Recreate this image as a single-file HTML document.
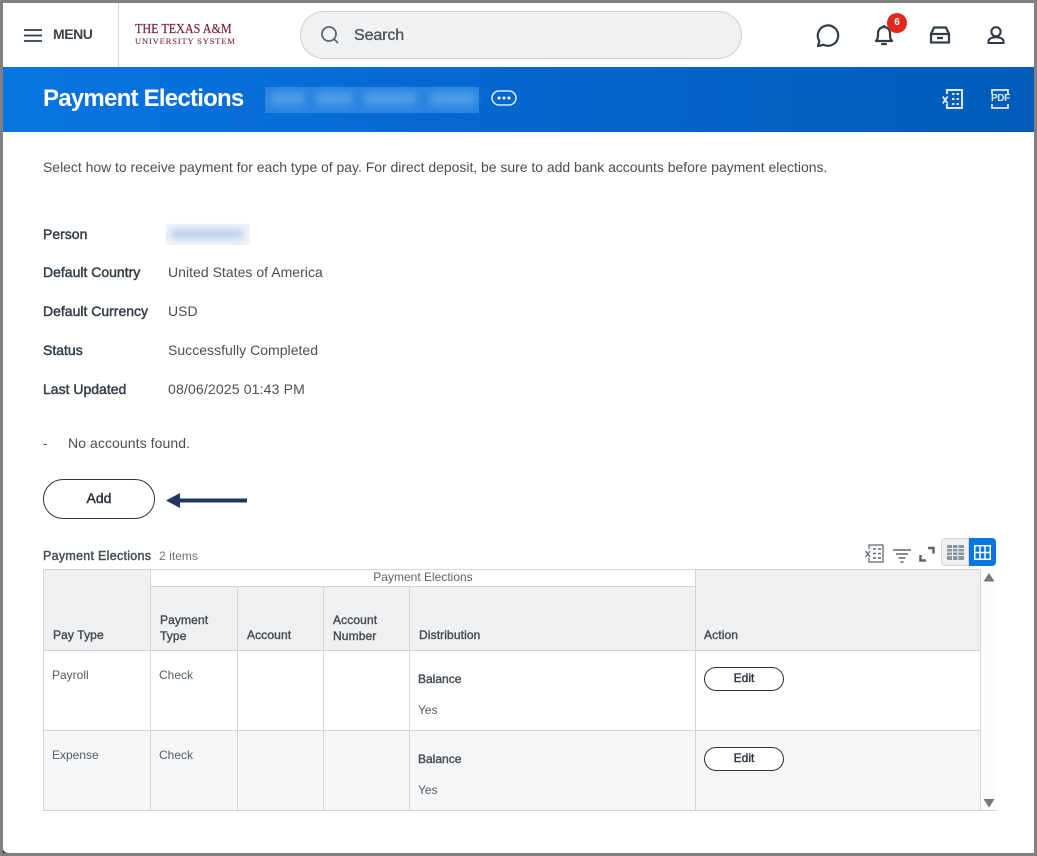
<!DOCTYPE html>
<html><head><meta charset="utf-8"><style>
html,body{margin:0;padding:0;background:#fff}
#p{position:relative;width:1037px;height:856px;overflow:hidden;background:#fff;font-family:"Liberation Sans",sans-serif;color:#333d47}
#p div,#p svg{position:absolute}
.t{white-space:nowrap;line-height:16px}
.l{font-size:14px;-webkit-text-stroke:.45px #333d47;color:#333d47;left:43px}
.v{font-size:14px;color:#494f55;left:168px;letter-spacing:.03px}
.h{font-size:12px;-webkit-text-stroke:.4px #444c54;color:#444c54;line-height:15px;white-space:nowrap;letter-spacing:.12px}
.c{font-size:12px;color:#555c63;white-space:nowrap;line-height:14px}
.b{background:#d2d4d6}
.btn{border:1px solid #333;border-radius:13px;background:#fff;box-sizing:border-box;text-align:center;font-size:12px;-webkit-text-stroke:.4px #2b3440;color:#2b3440;width:80px;height:24px;left:704px;line-height:20px}
</style></head><body><div id="p">
<!-- top bar -->
<div style="left:118px;top:3px;width:1px;height:64px;background:#d3d5d8"></div>
<svg style="left:24px;top:29px" width="18" height="13"><path d="M0 1h18M0 6.500h18M0 12h18" stroke="#333d47" stroke-width="1.800"/></svg>
<div class="t" style="left:53px;top:26px;font-size:14px;font-weight:bold;color:#3b434c;letter-spacing:-.45px">MENU</div>
<div class="t" style="left:135px;top:23px;font-family:'Liberation Serif',serif;font-size:14px;line-height:14px;color:#7a1f3d;-webkit-text-stroke:.2px #7a1f3d;transform:scaleX(.865);transform-origin:0 0">THE TEXAS A&amp;M</div>
<div class="t" style="left:135px;top:36px;font-family:'Liberation Serif',serif;font-size:8.500px;line-height:11px;color:#7a1f3d;letter-spacing:.85px;-webkit-text-stroke:.1px #7a1f3d">UNIVERSITY SYSTEM</div>
<div style="left:300px;top:11px;width:442px;height:48px;box-sizing:border-box;background:#f0f1f2;border:1px solid #ced0d3;border-radius:24px"></div>
<svg style="left:320px;top:25px" width="20" height="20" fill="none"><circle cx="9" cy="9" r="7" stroke="#5e6670" stroke-width="1.800"/><path d="M14 14l4 4" stroke="#5e6670" stroke-width="1.800"/></svg>
<div class="t" style="left:354px;top:28px;font-size:16px;color:#4d555d;-webkit-text-stroke:.35px #4d555d;letter-spacing:-.1px">Search</div>
<svg style="left:815px;top:23px" width="26" height="25" fill="none"><path d="M3 23l1.300-5A10.200 10.200 0 1 1 8.500 21.800z" stroke="#333d47" stroke-width="2.200" stroke-linejoin="round"/></svg>
<svg style="left:874px;top:24px" width="20" height="22" fill="none" stroke="#333d47" stroke-width="2.200"><path d="M2 17c2-2 2-4 2-8a6 6 0 0 1 12 0c0 4 0 6 2 8z" stroke-linejoin="round"/><path d="M8 20h4" stroke-linecap="round"/><path d="M10 1v2"/></svg>
<div style="left:887px;top:13px;width:20px;height:20px;border-radius:50%;background:#e0281c;color:#fff;font-size:10px;font-weight:bold;line-height:20px;text-align:center">6</div>
<svg style="left:929px;top:26px" width="22" height="18" fill="none" stroke="#333d47" stroke-width="2.300"><path d="M2 8l3-6.500h12l3 6.500v8.500H2z" stroke-linejoin="round"/><path d="M2 8h18"/><path d="M8 12h6"/></svg>
<svg style="left:987px;top:26px" width="18" height="18" fill="none" stroke="#333d47" stroke-width="2.100"><circle cx="9" cy="5.800" r="4.600"/><path d="M1.500 17v-2c0-2.200 3.500-3.800 7.500-3.800s7.500 1.600 7.500 3.800v2z" stroke-linejoin="round"/></svg>
<!-- header -->
<div style="left:3px;top:67px;width:1031px;height:65px;background:linear-gradient(90deg,#0875e1 0%,#0565cc 55%,#005cb9 100%)"></div>
<div class="t" style="left:43px;top:85px;font-size:24px;line-height:28px;font-weight:bold;color:#fff;letter-spacing:-.76px">Payment Elections</div>
<div style="left:265px;top:87px;width:214px;height:26px;background:#2a84e0"></div>
<div style="left:270px;top:92px;width:35px;height:14px;background:#4e9ce8;border-radius:7px;filter:blur(4px)"></div>
<div style="left:315px;top:92px;width:38px;height:14px;background:#4e9ce8;border-radius:7px;filter:blur(4px)"></div>
<div style="left:363px;top:92px;width:54px;height:14px;background:#4e9ce8;border-radius:7px;filter:blur(4px)"></div>
<div style="left:430px;top:92px;width:47px;height:14px;background:#4e9ce8;border-radius:7px;filter:blur(4px)"></div>
<svg style="left:491px;top:90px" width="26" height="16" fill="none"><rect x="1" y="1" width="24" height="14" rx="7" stroke="#fff" stroke-width="1.300"/><circle cx="8" cy="8" r="1.500" fill="#fff"/><circle cx="13" cy="8" r="1.500" fill="#fff"/><circle cx="18" cy="8" r="1.500" fill="#fff"/></svg>
<svg style="left:942px;top:89px" width="21" height="20" fill="none" stroke="#dfe9f5" stroke-width="2"><path d="M5 5V1h15v18H5v-4"/><path d="M10 5h2.500M14.500 5H17M10 10h2.500M14.500 10H17M10 15h2.500M14.500 15H17" stroke-width="2"/><path d="M.7 7.500l5 7M5.700 7.500l-5 7" stroke-width="1.800"/></svg>
<svg style="left:990px;top:89px" width="20" height="20" fill="none" stroke="#dfe9f5" stroke-width="1.800"><path d="M2 5V1h16v4M2 15v4h16v-4"/></svg>
<div class="t" style="left:991px;top:91px;font-size:10px;font-weight:bold;color:#dfe9f5;line-height:15px;letter-spacing:-.4px">PDF</div>
<!-- body -->
<div class="t" style="left:43px;top:159px;font-size:14px;color:#494f55;letter-spacing:-.03px">Select how to receive payment for each type of pay. For direct deposit, be sure to add bank accounts before payment elections.</div>
<div class="t l" style="top:226px">Person</div>
<div style="left:166px;top:224px;width:84px;height:21px;background:#eef3fa"></div>
<div style="left:170px;top:229px;width:74px;height:10px;background:#bdd0e8;border-radius:5px;filter:blur(3.500px)"></div>
<div class="t l" style="top:264px">Default Country</div><div class="t v" style="top:264px">United States of America</div>
<div class="t l" style="top:303px">Default Currency</div><div class="t v" style="top:303px">USD</div>
<div class="t l" style="top:342px">Status</div><div class="t v" style="top:342px">Successfully Completed</div>
<div class="t l" style="top:381px">Last Updated</div><div class="t v" style="top:381px;letter-spacing:.16px">08/06/2025 01:43 PM</div>
<div class="t v" style="left:43px;top:435px">-</div><div class="t v" style="left:68px;top:435px;letter-spacing:.08px">No accounts found.</div>
<div style="left:43px;top:479px;width:112px;height:40px;box-sizing:border-box;border:1px solid #333;border-radius:20px;text-align:center;font-size:14px;-webkit-text-stroke:.45px #2b3440;line-height:36px;color:#2b3440">Add</div>
<svg style="left:165px;top:492px" width="82" height="18"><path d="M1 8.500L15 1v5.500h67v4H15V16z" fill="#1f3864"/></svg>
<!-- table toolbar -->
<div class="t" style="left:43px;top:548px;font-size:12.500px;-webkit-text-stroke:.4px #444c54;color:#444c54;letter-spacing:.28px">Payment Elections</div>
<div class="t" style="left:159px;top:548px;font-size:12px;color:#6b7177;letter-spacing:.05px">2 items</div>
<svg style="left:865px;top:544px" width="19" height="20" fill="none" stroke="#5e6670" stroke-width="1.300"><path d="M4 5V1h14v17H4v-4"/><path d="M8 5h3M13 5h3M8 9.500h3M13 9.500h3M8 14h3M13 14h3" stroke-width="1.600"/><path d="M.5 7l4.500 6M5 7L.500 13"/></svg>
<svg style="left:893px;top:549px" width="18" height="14" fill="none" stroke="#5e6670" stroke-width="1.500"><path d="M0 1h18M3 5h12M5.500 9h7M7.500 13h3"/></svg>
<svg style="left:919px;top:546px" width="16" height="16" fill="none" stroke="#5e6670" stroke-width="2.500"><path d="M9 2h5.500v5.500M1.500 9v5.500H7"/></svg>
<div style="left:941px;top:538px;width:28px;height:28px;box-sizing:border-box;background:#eef0f2;border:1px solid #d5d7da;border-radius:4px 0 0 4px"></div>
<svg style="left:947px;top:545px" width="17" height="15" fill="#8a949e"><rect width="17" height="15" rx="1"/><path d="M0 3.500h17M0 7h17M0 10.500h17M5.500 0v15M11 0v15" stroke="#eef0f2" stroke-width="1"/></svg>
<div style="left:969px;top:538px;width:27px;height:28px;background:#0875e1;border-radius:0 4px 4px 0"></div>
<svg style="left:974px;top:545px" width="17" height="15" fill="none" stroke="#fff" stroke-width="1.500"><rect x=".75" y=".75" width="15.500" height="13.500"/><path d="M0 7.500h17M6 0v15M11 0v15"/></svg>
<!-- table -->
<div style="left:44px;top:570px;width:106px;height:80px;background:#eff0f2"></div>
<div style="left:151px;top:587px;width:544px;height:63px;background:#eff0f2"></div>
<div style="left:696px;top:570px;width:284px;height:80px;background:#eff0f2"></div>
<div style="left:44px;top:731px;width:936px;height:79px;background:#f5f6f8"></div>
<div class="b" style="left:43px;top:569px;width:938px;height:1px"></div>
<div class="b" style="left:151px;top:586px;width:544px;height:1px"></div>
<div class="b" style="left:43px;top:650px;width:938px;height:1px"></div>
<div class="b" style="left:43px;top:730px;width:938px;height:1px"></div>
<div class="b" style="left:43px;top:810px;width:953px;height:1px"></div>
<div class="b" style="left:43px;top:569px;width:1px;height:241px"></div>
<div class="b" style="left:150px;top:569px;width:1px;height:241px"></div>
<div class="b" style="left:237px;top:586px;width:1px;height:224px"></div>
<div class="b" style="left:323px;top:586px;width:1px;height:224px"></div>
<div class="b" style="left:409px;top:586px;width:1px;height:224px"></div>
<div class="b" style="left:695px;top:569px;width:1px;height:241px"></div>
<div class="b" style="left:980px;top:569px;width:1px;height:241px"></div>
<div style="left:981px;top:570px;width:15px;height:240px;background:#fcfcfc"></div>
<svg style="left:983px;top:573px" width="12" height="9"><path d="M6 0l5.500 8.500H.5z" fill="#77797c"/></svg>
<svg style="left:983px;top:799px" width="12" height="9"><path d="M.5 0h11L6 8.500z" fill="#77797c"/></svg>
<div class="h" style="left:151px;width:544px;top:570px;text-align:center;-webkit-text-stroke:0;color:#5b6269;font-size:12px;letter-spacing:0">Payment Elections</div>
<div class="h" style="left:53px;top:628px">Pay Type</div>
<div class="h" style="left:160px;top:612px;line-height:16px">Payment<br>Type</div>
<div class="h" style="left:247px;top:628px">Account</div>
<div class="h" style="left:333px;top:612px;line-height:16px">Account<br>Number</div>
<div class="h" style="left:419px;top:628px">Distribution</div>
<div class="h" style="left:704px;top:628px">Action</div>
<div class="c" style="left:52px;top:668px">Payroll</div><div class="c" style="left:159px;top:668px">Check</div>
<div class="c" style="left:52px;top:748px">Expense</div><div class="c" style="left:159px;top:748px">Check</div>
<div class="c" style="left:418px;top:672px;-webkit-text-stroke:.4px #444c54;color:#444c54">Balance</div><div class="c" style="left:418px;top:703px">Yes</div>
<div class="c" style="left:418px;top:752px;-webkit-text-stroke:.4px #444c54;color:#444c54">Balance</div><div class="c" style="left:418px;top:783px">Yes</div>
<div class="btn" style="top:667px">Edit</div>
<div class="btn" style="top:747px">Edit</div>
<!-- frame -->
<div style="left:0;top:0;width:1037px;height:856px;box-sizing:border-box;border:3px solid #808080;pointer-events:none"></div>
<svg style="left:3px;top:848px" width="6" height="5"><path d="M0 0C0 3 2 5 6 5H0z" fill="#3a3230"/></svg>
</div></body></html>
